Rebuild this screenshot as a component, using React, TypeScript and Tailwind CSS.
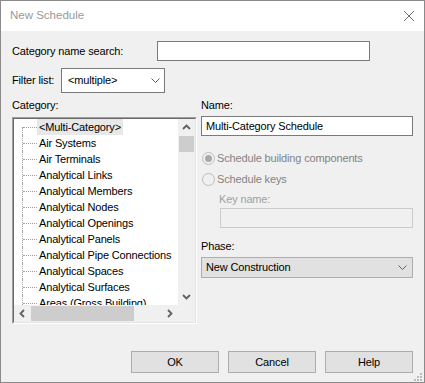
import React from "react";

const categories = [
  "<Multi-Category>",
  "Air Systems",
  "Air Terminals",
  "Analytical Links",
  "Analytical Members",
  "Analytical Nodes",
  "Analytical Openings",
  "Analytical Panels",
  "Analytical Pipe Connections",
  "Analytical Spaces",
  "Analytical Surfaces",
  "Areas (Gross Building)",
];

function Caret({ dir }: { dir: "up" | "down" | "left" | "right" }) {
  const pts = {
    up: "1,6 4.5,2.5 8,6",
    down: "1,3 4.5,6.5 8,3",
    left: "6,1 2.5,4.5 6,8",
    right: "3,1 6.5,4.5 3,8",
  }[dir];
  return (
    <svg width="9" height="9" viewBox="0 0 9 9">
      <polyline points={pts} fill="none" stroke="#606060" strokeWidth="1.8" />
    </svg>
  );
}

function SelectChevron() {
  return (
    <svg width="9" height="6" viewBox="0 0 9 6">
      <polyline points="0.5,0.5 4.5,4.5 8.5,0.5" fill="none" stroke="#606060" strokeWidth="1" />
    </svg>
  );
}

function Radio({ checked }: { checked?: boolean }) {
  return (
    <div className="w-[13px] h-[13px] shrink-0 rounded-full border border-[#bcbcbc] bg-[#f0f0f0] flex items-center justify-center">
      {checked && <div className="w-[7px] h-[7px] rounded-full bg-[#a8a8a8]" />}
    </div>
  );
}

function CategoryTree() {
  return (
    <div className="mt-[4px] h-[207px] border border-t-[#a0a0a0] border-l-[#a0a0a0] border-r-white border-b-white">
      <div className="h-full border border-t-[#696969] border-l-[#696969] border-r-[#e3e3e3] border-b-[#e3e3e3] flex flex-col">
        <div className="flex flex-1 min-h-0">
          <div className="flex-1 min-w-0 bg-white overflow-hidden pl-[8px]">
            {categories.map((c, i) => (
              <div key={c} className="flex h-[16px] items-stretch whitespace-nowrap">
                <div className={`w-[1px] shrink-0 border-l border-dotted border-[#a0a0a0] ${i === 0 ? "mt-[8px]" : ""}`} />
                <div className="w-[14px] shrink-0 self-center border-t border-dotted border-[#a0a0a0]" />
                <div className={`px-[2px] leading-[16px] ${i === 0 ? "bg-[#e8e8e8]" : ""}`}>{c}</div>
              </div>
            ))}
          </div>
          <div className="w-[17px] shrink-0 bg-[#f0f0f0] flex flex-col">
            <div className="h-[17px] flex items-center justify-center">
              <Caret dir="up" />
            </div>
            <div className="h-[16px] mx-[1px] bg-[#cdcdcd]" />
            <div className="flex-1" />
            <div className="h-[17px] flex items-center justify-center">
              <Caret dir="down" />
            </div>
          </div>
        </div>
        <div className="h-[17px] flex bg-[#f0f0f0]">
          <div className="w-[17px] flex items-center justify-center">
            <Caret dir="left" />
          </div>
          <div className="w-[103px] my-[1px] bg-[#cdcdcd]" />
          <div className="flex-1" />
          <div className="w-[17px] flex items-center justify-center">
            <Caret dir="right" />
          </div>
          <div className="w-[17px]" />
        </div>
      </div>
    </div>
  );
}

export default function App() {
  return (
    <div className="w-[425px] h-[383px] border border-[#8a8a8a] bg-[#f0f0f0] flex flex-col font-['Liberation_Sans',Arial,sans-serif] text-[11px] tracking-[-0.15px] text-black">
      <div className="h-[30px] bg-white flex items-center justify-between pl-[9px] pr-[9px] shrink-0">
        <span className="text-[#999999] text-[11.5px] tracking-normal">New Schedule</span>
        <svg width="12" height="12" viewBox="0 0 12 12">
          <path d="M1 1 L11 11 M11 1 L1 11" stroke="#707070" strokeWidth="1" />
        </svg>
      </div>

      <div className="relative flex-1 flex flex-col pl-[11px] pr-[11px]">
        <div className="mt-[10px] flex items-center h-[20px]">
          <div className="w-[145px] whitespace-nowrap">Category name search:</div>
          <div className="w-[213px] h-[20px] border border-[#7a7a7a] bg-white" />
        </div>

        <div className="mt-[7px] flex items-center h-[25px]">
          <div className="w-[49px] whitespace-nowrap">Filter list:</div>
          <div className="w-[104px] h-[25px] border border-[#7a7a7a] bg-white flex items-center justify-between pl-[6px] pr-[4px]">
            <span>&lt;multiple&gt;</span>
            <SelectChevron />
          </div>
        </div>

        <div className="mt-[4px] flex gap-[4px]">
          <div className="w-[185px]">
            <div className="h-[16px] leading-[16px]">Category:</div>
            <CategoryTree />
          </div>

          <div className="w-[212px] flex flex-col">
            <div className="h-[16px] leading-[16px]">Name:</div>
            <div className="mt-[3px] h-[20px] border border-[#7a7a7a] bg-white flex items-center pl-[4px]">
              Multi-Category Schedule
            </div>

            <div className="mt-[14px] h-[16px] flex items-center gap-[2px] pl-[1px] text-[#838383]">
              <Radio checked />
              <span>Schedule building components</span>
            </div>
            <div className="mt-[5px] h-[16px] flex items-center gap-[2px] pl-[1px] text-[#838383]">
              <Radio />
              <span>Schedule keys</span>
            </div>

            <div className="mt-[4px] ml-[18px] h-[16px] leading-[16px] text-[#a0a0a0]">Key name:</div>
            <div className="mt-[1px] ml-[19px] h-[20px] border border-[#cccccc] bg-[#f0f0f0]" />

            <div className="mt-[10px] h-[16px] leading-[16px]">Phase:</div>
            <div className="mt-[3px] h-[21px] border border-[#adadad] bg-[#e1e1e1] flex items-center justify-between pl-[4px] pr-[5px]">
              <span>New Construction</span>
              <SelectChevron />
            </div>
          </div>
        </div>

        <div className="mt-auto mb-[9px] flex justify-end gap-[9px]">
          {["OK", "Cancel", "Help"].map((b) => (
            <button key={b} className="w-[88px] h-[22px] border border-[#adadad] bg-[#e1e1e1] flex items-center justify-center">
              {b}
            </button>
          ))}
        </div>

        <svg className="absolute right-[2px] bottom-[1px]" width="8" height="8" viewBox="0 0 8 8">
          <rect x="6" y="0" width="2" height="2" fill="#bcbcbc" />
          <rect x="3" y="3" width="2" height="2" fill="#bcbcbc" />
          <rect x="6" y="3" width="2" height="2" fill="#bcbcbc" />
          <rect x="0" y="6" width="2" height="2" fill="#bcbcbc" />
          <rect x="3" y="6" width="2" height="2" fill="#bcbcbc" />
          <rect x="6" y="6" width="2" height="2" fill="#bcbcbc" />
        </svg>
      </div>
    </div>
  );
}
